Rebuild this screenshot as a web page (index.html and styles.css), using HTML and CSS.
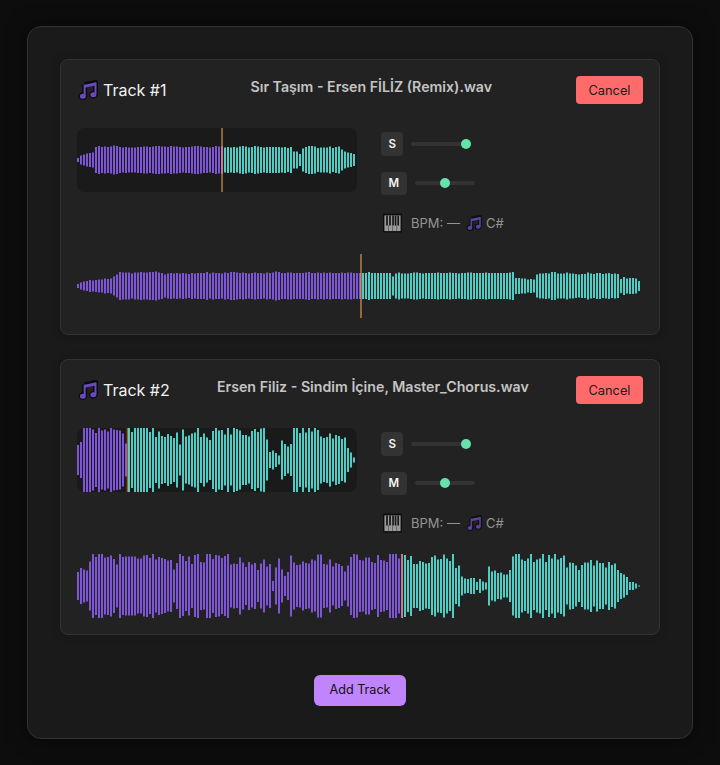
FILE: index.html
```html
<!DOCTYPE html>
<html lang="en">
<head>
  <meta charset="UTF-8">
  <meta name="viewport" content="width=device-width, initial-scale=1.0">
  <title>Track Mixer</title>
  <link rel="stylesheet" href="styles.css">
</head>
<body>
  <svg class="defs" width="0" height="0" aria-hidden="true">
    <symbol id="note" viewBox="0 0 24 24">
      <path d="M8 5.5 L21 3 V18 M8 5.5 V20" fill="none" stroke="#0b0b0f" stroke-width="6" stroke-linejoin="round"/>
      <ellipse cx="5.8" cy="19.4" rx="4.4" ry="3.8" fill="#6a4bbd" stroke="#0b0b0f" stroke-width="1.6"/>
      <ellipse cx="18.4" cy="17.8" rx="4.4" ry="3.8" fill="#6a4bbd" stroke="#0b0b0f" stroke-width="1.6"/>
      <path d="M8 5.6 L21 3 V6.6 L8 9.2 Z" fill="#6a4bbd"/>
      <path d="M8 5.6 V19 M21 3 V17.5" fill="none" stroke="#6a4bbd" stroke-width="2.4"/>
    </symbol>
    <symbol id="piano" viewBox="0 0 20 20">
      <rect width="20" height="20" fill="#0c0c0c"/>
      <rect x="1.5" y="2" width="17" height="16.5" fill="#a8a8a8"/>
      <path d="M4.2 2 V12.5 M7.4 2 V12.5 M10.6 2 V12.5 M13.2 2 V12.5 M16 2 V12.5" stroke="#161616" stroke-width="1.8"/>
      <path d="M5.8 12.5 V18.5 M10 12.5 V18.5 M14.4 12.5 V18.5" stroke="#5a5a5a" stroke-width="0.8"/>
    </symbol>
  </svg>

  <main class="mixer">
    <section class="track">
      <header class="track-head">
        <div class="track-name"><svg class="icon-note"><use href="#note"/></svg>Track #1</div>
        <h3 class="track-file">Sır Taşım - Ersen FİLİZ (Remix).wav</h3>
        <button class="btn-cancel">Cancel</button>
      </header>
      <div class="track-body">
        <canvas class="wave-small" width="280" height="64" data-wave="t1small" data-progress="0.518"></canvas>
        <div class="controls">
          <div class="ctl-row"><button class="btn-toggle">S</button><input type="range" class="slider" min="0" max="100" value="100"></div>
          <div class="ctl-row"><button class="btn-toggle">M</button><input type="range" class="slider" min="0" max="100" value="50"></div>
          <div class="meta-row">
            <svg class="icon-piano"><use href="#piano"/></svg>
            <span class="meta">BPM: —</span>
            <svg class="icon-note-small"><use href="#note"/></svg>
            <span class="meta">C#</span>
          </div>
        </div>
      </div>
      <canvas class="wave-large" width="563" height="64" data-wave="t1large" data-progress="0.5044"></canvas>
    </section>

    <section class="track">
      <header class="track-head">
        <div class="track-name"><svg class="icon-note"><use href="#note"/></svg>Track #2</div>
        <h3 class="track-file">Ersen Filiz - Sindim İçine, Master_Chorus.wav</h3>
        <button class="btn-cancel">Cancel</button>
      </header>
      <div class="track-body">
        <canvas class="wave-small" width="280" height="64" data-wave="t2small" data-progress="0.181"></canvas>
        <div class="controls">
          <div class="ctl-row"><button class="btn-toggle">S</button><input type="range" class="slider" min="0" max="100" value="100"></div>
          <div class="ctl-row"><button class="btn-toggle">M</button><input type="range" class="slider" min="0" max="100" value="50"></div>
          <div class="meta-row">
            <svg class="icon-piano"><use href="#piano"/></svg>
            <span class="meta">BPM: —</span>
            <svg class="icon-note-small"><use href="#note"/></svg>
            <span class="meta">C#</span>
          </div>
        </div>
      </div>
      <canvas class="wave-large" width="563" height="64" data-wave="t2large" data-progress="0.5773"></canvas>
    </section>

    <div class="add-row"><button class="btn-add">Add Track</button></div>
  </main>
  <script src="waves.js"></script>
</body>
</html>
```

FILE: styles.css
```css
* {
  box-sizing: border-box;
}
body {
  margin: 0;
  padding: 26px 27px;
  background-color: #0d0d0d;
  color: #eee;
  font-family: Inter, "Noto Sans", sans-serif;
}
.defs {
  display: none;
}
.mixer {
  display: flex;
  flex-direction: column;
  gap: 24px;
  padding: 32px;
  background-color: #1a1a1a;
  border: 1px solid #333;
  border-radius: 14px;
  box-shadow: 0 0 20px rgba(0, 0, 0, 0.5);
}
.track {
  padding: 16px;
  background-color: #222;
  border: 1px solid #333;
  border-radius: 8px;
  box-shadow: 0 0 10px rgba(0, 0, 0, 0.2);
}
.track-head {
  display: flex;
  justify-content: space-between;
  align-items: flex-start;
  height: 28px;
  margin-bottom: 24px;
}
.track-name {
  display: flex;
  align-items: center;
  gap: 5px;
  height: 28px;
  padding-left: 1px;
  font-size: 16px;
  color: #f2f2f2;
}
.icon-note {
  width: 20px;
  height: 20px;
}
.track-file {
  margin: 0;
  font-size: 14.2px;
  font-weight: 600;
  line-height: 22px;
  color: #c4c4c4;
}
.btn-cancel {
  width: 67px;
  height: 28px;
  padding: 0;
  background-color: #ff6b6b;
  color: #1a1a1a;
  border: none;
  border-radius: 4px;
  font-family: inherit;
  font-size: 12.8px;
}
.track-body {
  display: flex;
  gap: 24px;
  height: 108px;
  margin-bottom: 18px;
}
.wave-small {
  display: block;
  width: 280px;
  height: 64px;
  background-color: #1a1a1a;
  border-radius: 8px;
}
.wave-large {
  display: block;
  width: 563px;
  height: 64px;
}
.controls {
  display: flex;
  flex-direction: column;
  gap: 16px;
  padding-top: 4px;
}
.ctl-row {
  display: flex;
  align-items: center;
  gap: 8px;
}
.btn-toggle {
  height: 23.5px;
  padding: 0 7.5px;
  background-color: #333;
  color: #f2f2f2;
  border: none;
  border-radius: 4px;
  font-family: inherit;
  font-size: 11.5px;
  font-weight: 600;
}
.slider {
  -webkit-appearance: none;
  appearance: none;
  width: 60px;
  height: 10px;
  margin: 0;
  background: transparent;
}
.slider::-webkit-slider-runnable-track {
  height: 4px;
  background-color: #333;
  border-radius: 2px;
}
.slider::-webkit-slider-thumb {
  -webkit-appearance: none;
  width: 10px;
  height: 10px;
  margin-top: -3px;
  background-color: #64e3ac;
  border-radius: 50%;
}
.meta-row {
  display: flex;
  align-items: center;
  height: 23px;
  padding-left: 2px;
}
.icon-piano {
  width: 19px;
  height: 20px;
  margin-right: 9px;
  opacity: 0.9;
}
.icon-note-small {
  width: 16px;
  height: 16px;
  margin: 0 4px 0 6px;
  opacity: 0.8;
}
.meta {
  font-size: 13px;
  color: #949494;
}
.add-row {
  display: flex;
  justify-content: center;
  padding-top: 16px;
}
.btn-add {
  width: 92px;
  height: 31px;
  padding: 0 0 2px;
  background-color: #c084fc;
  color: #111;
  border: none;
  border-radius: 6px;
  font-family: inherit;
  font-size: 12.6px;
}
```

FILE: waves.js
```js
// peak heights in px, one per bar (2px bar, 1px gap)
var PEAKS = {
  t1small: [4,9,11,13,14,15,26,28,26,27,26,27,29,28,26,25,26,25,25,25,26,26,27,27,26,27,28,28,27,27,26,28,27,27,26,25,26,26,27,28,28,27,26,26,25,26,28,27,
    27,25,26,25,26,25,27,28,27,25,26,28,27,26,25,26,26,26,26,26,25,26,24,26,17,17,12,23,26,28,28,27,24,25,25,25,27,24,26,27,21,17,15,14,12],
  t1large: [4,7,9,10,12,11,12,13,13,15,14,15,19,23,28,27,27,27,25,27,27,28,27,27,28,28,29,27,26,23,25,26,25,26,25,26,25,24,26,25,26,26,26,28,25,27,26,26,25,27,
    26,28,28,27,26,27,26,25,26,27,26,26,25,27,26,27,29,28,26,26,27,27,26,26,26,26,27,28,26,26,27,26,27,26,27,26,26,26,27,26,27,27,26,26,26,
    26,26,28,26,26,26,26,26,26,26,19,25,27,25,25,25,26,27,27,26,25,26,26,26,26,27,26,26,26,27,26,26,25,26,26,27,27,26,26,26,26,27,26,26,26,26,26,26,26,27,28,16,16,15,15,13,14,13,
    23,25,25,26,25,28,28,25,25,25,27,25,25,24,23,24,24,27,25,24,26,26,24,25,26,24,25,24,14,18,15,16,16,15,10],
  t2small: [30,36,64,64,64,61,54,64,59,61,57,64,61,60,59,53,33,64,56,64,64,64,64,64,56,64,46,57,48,46,52,48,44,55,31,61,47,49,53,55,64,46,53,45,40,58,64,59,60,51,64,51,64,62,59,50,50,47,58,62,56,63,64,41,16,19,14,9,39,32,27,32,64,64,54,64,55,64,57,64,60,47,44,46,53,43,50,48,42,45,24,15,5],
  t2large: [28,36,33,31,49,64,58,64,64,57,58,61,54,43,64,58,59,59,59,59,55,55,61,62,56,64,53,58,56,54,51,52,33,46,64,60,50,59,44,62,64,48,47,64,64,54,62,61,56,60,64,43,45,44,57,47,38,48,43,46,32,45,53,39,44,10,37,55,33,20,28,61,47,42,43,49,46,45,53,51,63,63,44,43,53,39,46,44,40,29,41,58,64,63,52,
    51,57,57,48,46,62,52,51,48,64,64,64,55,64,62,52,60,44,44,50,48,45,46,58,61,53,54,63,55,50,64,36,41,19,15,14,16,16,8,14,9,7,39,29,31,26,27,23,23,32,59,64,64,53,50,55,64,48,53,55,64,48,62,55,64,53,56,61,37,47,46,41,32,42,47,47,52,41,51,46,46,37,48,42,45,32,26,23,18,8,8,5,1]
};
var PLAYED = '#7d55d6';
var UNPLAYED = '#4ecdc4';
var CURSOR = 'rgba(245, 170, 85, 0.52)';

document.querySelectorAll('canvas[data-wave]').forEach(function (canvas) {
  var ctx = canvas.getContext('2d');
  var peaks = PEAKS[canvas.dataset.wave];
  var mid = canvas.height / 2;
  var cursorX = canvas.width * parseFloat(canvas.dataset.progress);

  peaks.forEach(function (h, i) {
    var x = i * 3;
    ctx.fillStyle = x + 1 < cursorX ? PLAYED : UNPLAYED;
    ctx.fillRect(x, mid - h / 2, 2, h);
  });

  ctx.fillStyle = CURSOR;
  ctx.fillRect(cursorX - 1, 0, 2, canvas.height);
});
```
